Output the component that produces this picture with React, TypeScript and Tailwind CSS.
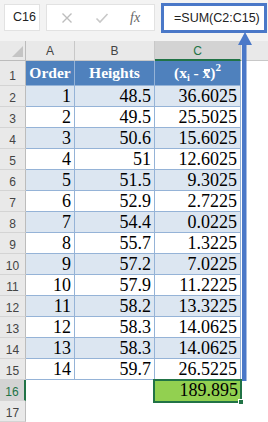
import React from "react";

const rows: [number, string, string][] = [
  [1, "48.5", "36.6025"],
  [2, "49.5", "25.5025"],
  [3, "50.6", "15.6025"],
  [4, "51", "12.6025"],
  [5, "51.5", "9.3025"],
  [6, "52.9", "2.7225"],
  [7, "54.4", "0.0225"],
  [8, "55.7", "1.3225"],
  [9, "57.2", "7.0225"],
  [10, "57.9", "11.2225"],
  [11, "58.2", "13.3225"],
  [12, "58.3", "14.0625"],
  [13, "58.3", "14.0625"],
  [14, "59.7", "26.5225"],
];

const sans = "font-['Liberation_Sans',Arial,sans-serif]";
const serif = "font-['Liberation_Serif','Times_New_Roman',serif]";

function RowHead({ n, active }: { n: number; active?: boolean }) {
  return (
    <div
      className={`w-[26px] h-[21px] shrink-0 border-b border-[#d4d4d4] flex justify-center pt-[4px] leading-[16px] text-[12px] ${sans} ${
        active
          ? "bg-[#d3d3d3] text-[#217346] border-r-2 border-r-[#217346]"
          : "bg-[#e9e9e9] text-[#444] border-r border-r-[#bcbcbc]"
      }`}
    >
      {n}
    </div>
  );
}

function FormulaBar() {
  return (
    <div className="h-[41px] bg-[#f3f3f3] flex items-start pt-[4px] pl-[4px] gap-[6px]">
      <div className={`w-[36px] h-[27px] bg-white border border-[#e2e2e2] flex items-center pl-[8px] text-[12.5px] text-[#222] ${sans}`}>
        C16
      </div>
      <div className="w-[109px] h-[27px] bg-white border border-[#e2e2e2] flex items-center">
        <svg width="12" height="12" viewBox="0 0 12 12" className="ml-[14px]">
          <path d="M1.5 1.5 L10.5 10.5 M10.5 1.5 L1.5 10.5" stroke="#bdbdbd" strokeWidth="1.4" fill="none" />
        </svg>
        <svg width="14" height="12" viewBox="0 0 14 12" className="ml-[22px]">
          <path d="M1.5 6.5 L5 10 L12.5 2" stroke="#c8c8c8" strokeWidth="1.6" fill="none" />
        </svg>
        <span className={`ml-[21px] italic text-[14px] text-[#666] ${serif}`}>fx</span>
      </div>
      <div className={`w-[106px] h-[30px] -mt-[1px] bg-white border-[3px] border-[#4a78c8] flex items-center pl-[10px] text-[12.5px] text-[#222] ${sans}`}>
        =SUM(C2:C15)
      </div>
    </div>
  );
}

function ColumnHeads() {
  const base = `h-[20px] shrink-0 flex justify-center pt-[2px] leading-[16px] text-[12px] ${sans}`;
  return (
    <div className="flex bg-[#e9e9e9]">
      <div className="w-[26px] h-[20px] shrink-0 border-r border-b border-[#bcbcbc] relative">
        <div className="absolute right-[2px] bottom-[3px] w-0 h-0 border-l-[11px] border-l-transparent border-b-[11px] border-b-[#c4c4c4]" />
      </div>
      <div className={`${base} w-[49px] border-r border-b border-[#c8c8c8] text-[#444]`}>A</div>
      <div className={`${base} w-[80px] border-r border-b border-[#c8c8c8] text-[#444]`}>B</div>
      <div className={`${base} w-[86px] bg-[#d3d3d3] border-r border-r-[#c8c8c8] border-b-2 border-b-[#217346] text-[#217346]`}>C</div>
      <div className={`${base} flex-1 border-b border-[#c8c8c8]`} />
    </div>
  );
}

export default function App() {
  const cell = `h-[21px] shrink-0 border-r border-b border-[#95b3d7] text-right pr-[3px] leading-[20px] text-[18px] text-black ${serif}`;
  const head = `h-[25px] shrink-0 bg-[#4f81bd] border-r border-b border-[#95b3d7] text-center leading-[24px] text-[15.5px] font-bold text-white ${serif}`;
  return (
    <div className="w-[268px] h-[422px] bg-white overflow-hidden relative">
      <FormulaBar />
      <ColumnHeads />

      {/* header row */}
      <div className="flex">
        <div className={`w-[26px] h-[25px] shrink-0 bg-[#e9e9e9] border-r border-b border-r-[#bcbcbc] border-b-[#d4d4d4] flex justify-center pt-[7px] leading-[16px] text-[12px] text-[#444] ${sans}`}>
          1
        </div>
        <div className={`${head} w-[49px]`}>Order</div>
        <div className={`${head} w-[80px]`}>Heights</div>
        <div className={`${head} w-[86px]`}>
          (x
          <span className="text-[10px] relative top-[3px]">i</span> -{" "}
          <span className="relative inline-block">
            x
            <span className="absolute left-[1px] right-[0px] top-[8px] h-[1.5px] bg-white" />
          </span>
          )<span className="text-[11px] relative -top-[7px]">2</span>
        </div>
        <div className="flex-1 h-[25px]" />
      </div>

      {rows.map(([o, h, v], i) => {
        const band = i % 2 === 0 ? "bg-[#dce6f1]" : "bg-white";
        return (
          <div key={o} className="flex">
            <RowHead n={i + 2} />
            <div className={`${cell} ${band} w-[49px]`}>{o}</div>
            <div className={`${cell} ${band} w-[80px]`}>{h}</div>
            <div className={`${cell} ${band} w-[86px]`}>{v}</div>
            <div className="flex-1 h-[21px]" />
          </div>
        );
      })}

      {/* row 16 with total */}
      <div className="flex">
        <RowHead n={16} active />
        <div className="w-[129px] h-[21px] shrink-0" />
        <div className={`w-[85px] h-[21px] shrink-0 bg-[#92d050] text-right pr-[2px] leading-[20px] text-[18px] text-black relative ${serif}`}>
          189.895
          <div className="absolute -left-[2px] -top-[1px] -right-[2px] -bottom-[2px] border-2 border-[#217346]" />
          <div className="absolute -right-[4px] -bottom-[4px] w-[6px] h-[6px] bg-[#217346] border border-white" />
        </div>
        <div className="flex-1 h-[21px]" />
      </div>

      <div className="flex">
        <RowHead n={17} />
        <div className="flex-1 h-[21px]" />
      </div>

      {/* blue arrow pointing to the formula */}
      <svg className="absolute left-[236px] top-[30px]" width="18" height="352" viewBox="0 0 18 352">
        <polygon points="9,2 2,15 16,15" fill="#4a78c8" />
        <rect x="6" y="14" width="4.5" height="337" fill="#4a78c8" />
      </svg>
    </div>
  );
}
